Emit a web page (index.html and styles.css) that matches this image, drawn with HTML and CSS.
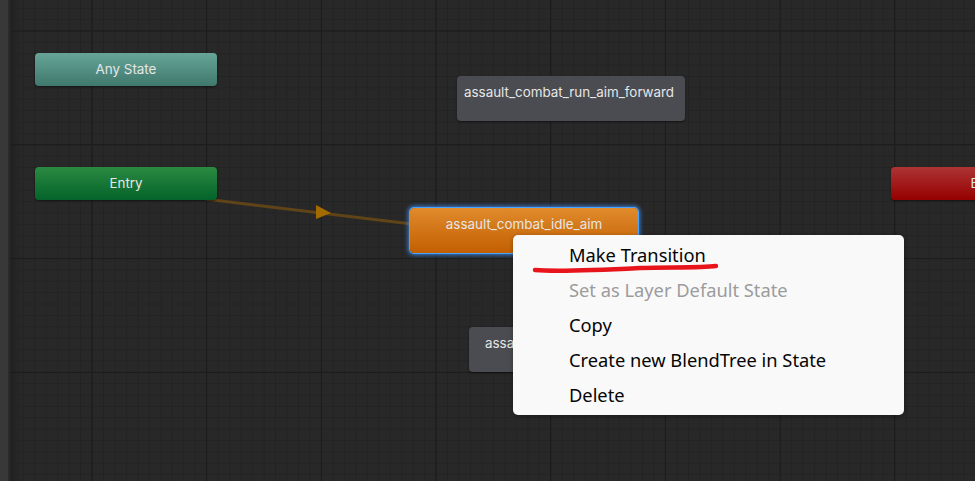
FILE: index.html
```html
<!DOCTYPE html>
<html>
<head>
<meta charset="utf-8">
<link rel="stylesheet" href="styles.css">
</head>
<body>
<div class="app">
  <div class="side"></div>
  <div class="divider"></div>
  <div class="canvas">
    <svg class="links" width="975" height="481" viewBox="0 0 975 481">
      <line x1="205" y1="199" x2="412" y2="224" stroke="#5f4418" stroke-width="3"/>
      <polygon points="316,205 331,213 316,219" fill="#a36a00"/>
    </svg>
    <div class="node any" style="left:35px;top:53px">Any State</div>
    <div class="node entry" style="left:35px;top:167px">Entry</div>
    <div class="node exit" style="left:891px;top:167px">Exit</div>
    <div class="node state top" style="left:457px;top:76px">assault_combat_run_aim_forward</div>
    <div class="node state top bottomstate" style="left:469px;top:327px">assault_combat_run_aim_back</div>
    <div class="node state selected" style="left:410px;top:208px">assault_combat_idle_aim</div>
  </div>
</div>
<div class="menu">
  <div class="item">Make Transition</div>
  <div class="item disabled">Set as Layer Default State</div>
  <div class="item">Copy</div>
  <div class="item">Create new BlendTree in State</div>
  <div class="item">Delete</div>
</div>
<svg class="scribble" width="975" height="481" viewBox="0 0 975 481">
  <path d="M535 270 C 560 272, 600 270, 640 268 C 670 267, 700 268, 716 266" fill="none" stroke="#e8141c" stroke-width="4.5" stroke-linecap="round"/>
</svg>
</body>
</html>
```
FILE: styles.css
```css
html, body {
  margin: 0;
  padding: 0;
  width: 975px;
  height: 481px;
  overflow: hidden;
  background: #282828;
  font-family: Inter, "Noto Sans", sans-serif;
}
.app {
  display: flex;
  width: 975px;
  height: 481px;
}
.side {
  width: 8px;
  background: #383838;
  flex: none;
}
.divider {
  width: 2px;
  background: #2b2b2b;
  flex: none;
}
.canvas {
  position: relative;
  flex: 1;
  background-color: #282828;
  background-image:
    linear-gradient(to right, #1b1b1b 1px, transparent 1px),
    linear-gradient(to bottom, #1b1b1b 1px, transparent 1px),
    linear-gradient(to right, #232323 1px, transparent 1px),
    linear-gradient(to bottom, #232323 1px, transparent 1px),
    linear-gradient(to right, rgba(0,0,0,0.18), rgba(0,0,0,0) 12px);
  background-size: 114.7px 114.7px, 114.7px 113.8px, 11.47px 11.47px, 11.38px 11.38px, 100% 100%;
  background-position: 81.5px 0, 0 30.5px, 1.3px 0, 0 7.8px, 0 0;
  background-repeat: repeat, repeat, repeat, repeat, no-repeat;
  overflow: hidden;
}
.links {
  position: absolute;
  left: -10px;
  top: 0;
}
.node {
  position: absolute;
  box-sizing: border-box;
  color: #e6e6e6;
  font-size: 13.4px;
  border-radius: 4px;
  text-align: center;
  box-shadow: 0 1px 2px rgba(0,0,0,0.5);
  margin-left: -10px;
}
.any {
  width: 182px;
  height: 33px;
  line-height: 33px;
  background: linear-gradient(#66a598, #40786d);
}
.entry {
  width: 182px;
  height: 33px;
  line-height: 33px;
  background: linear-gradient(#2b8a41, #03632a);
}
.exit {
  width: 182px;
  height: 33px;
  line-height: 33px;
  background: linear-gradient(#ad3434, #960000);
}
.state {
  width: 228px;
  height: 45px;
  background: #4a4c51;
  line-height: 32px;
}
.top {
  text-align: left;
  padding-left: 7px;
}
.bottomstate {
  padding-left: 16px;
}
.selected {
  text-align: center;
  padding-left: 0;
  line-height: 32px;
  background: linear-gradient(#e08b2c, #c25f02);
  box-shadow: 0 0 0 1px #4aa3ff, 0 0 4px 2px rgba(60,150,255,0.8);
}
.menu {
  position: absolute;
  left: 513px;
  top: 235px;
  width: 391px;
  height: 180px;
  box-sizing: border-box;
  background: #f9f9f9;
  border-radius: 5px;
  box-shadow: 0 1px 4px rgba(0,0,0,0.35);
  padding-top: 2px;
  font-family: "Noto Sans", sans-serif;
  font-size: 18.3px;
  color: #050505;
}
.item {
  height: 35px;
  line-height: 35px;
  padding-left: 56px;
}
.disabled {
  color: #9c9c9c;
}
.scribble {
  position: absolute;
  left: 0;
  top: 0;
  pointer-events: none;
}
```
